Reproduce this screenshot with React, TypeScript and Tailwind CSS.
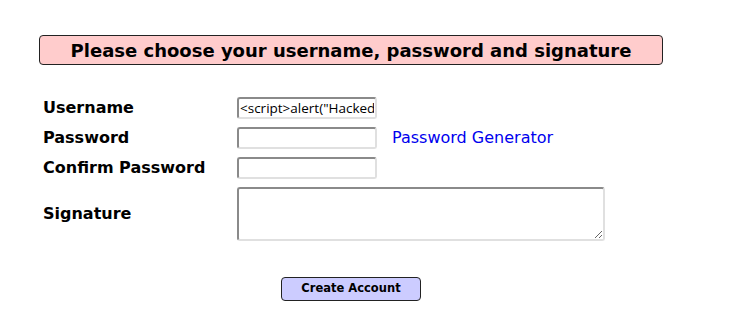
function Field({ value }: { value?: string }) {
  return (
    <input
      type="text"
      defaultValue={value}
      className="h-[22px] w-[140px] rounded-[3px] border-2 border-t-[#8a8a8a] border-l-[#8a8a8a] border-r-[#e0e0e0] border-b-[#e0e0e0] bg-white px-[1px] text-[13.5px] text-black outline-none [font-family:'Open_Sans',sans-serif]"
    />
  );
}

export default function App() {
  return (
    <div className="min-h-[336px] w-[742px] bg-white text-black [font-family:'DejaVu_Sans',sans-serif]">
      <div className="pl-[39px] pt-[35px]">
        <div className="flex h-[30px] w-[624px] items-center justify-center rounded-[4px] border border-[#222] bg-[#ffcccc]">
          <h1 className="text-[18px] font-bold">Please choose your username, password and signature</h1>
        </div>
      </div>

      <div className="mt-[31px] grid grid-cols-[194px_auto] items-center gap-y-[6px] pl-[43px]">
        <label className="text-[16px] font-bold">Username</label>
        <div>
          <Field value={'<script>alert("Hacked")</script>'} />
        </div>

        <label className="text-[16px] font-bold">Password</label>
        <div className="flex items-center gap-[15px]">
          <Field />
          <a href="#" className="text-[16px] text-[#0000ee]">
            Password Generator
          </a>
        </div>

        <label className="text-[16px] font-bold">Confirm Password</label>
        <div>
          <Field />
        </div>

        <label className="text-[16px] font-bold">Signature</label>
        <div className="pt-[1px]">
          <textarea className="block h-[54px] w-[368px] resize rounded-[3px] border-2 border-t-[#8a8a8a] border-l-[#8a8a8a] border-r-[#e0e0e0] border-b-[#e0e0e0] bg-white outline-none" />
        </div>
      </div>

      <div className="mt-[34px] pl-[281px]">
        <button className="h-[24px] w-[140px] rounded-[4px] border border-[#222] bg-[#ccccff] text-[11.5px] font-bold">
          Create Account
        </button>
      </div>
    </div>
  );
}
